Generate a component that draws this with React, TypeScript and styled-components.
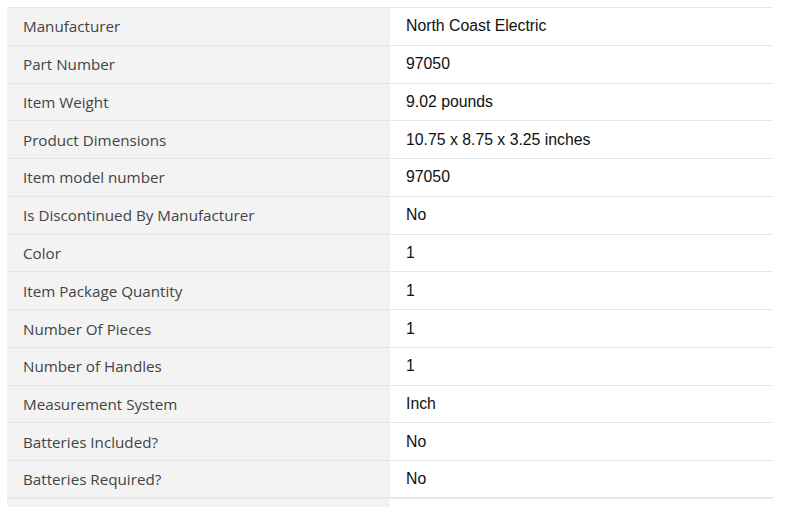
import React from "react";
import styled, { createGlobalStyle } from "styled-components";

const Global = createGlobalStyle`
  html, body { margin: 0; padding: 0; background: #ffffff; }
  body { width: 787px; height: 507px; overflow: hidden; }
`;

const Page = styled.div`
  padding: 7px 0 0 7px;
`;

const Table = styled.div`
  width: 766px;
  display: grid;
  grid-template-columns: 383px 1fr;
  border-top: 1px solid #e7e7e7;
`;

const Label = styled.div<{ $thick?: boolean }>`
  height: 37.77px;
  box-sizing: border-box;
  display: flex;
  align-items: center;
  padding-left: 16px;
  background: #f3f3f3;
  border-bottom: ${(p) => (p.$thick ? "2px" : "1px")} solid #e7e7e7;
  font-family: "Open Sans", sans-serif;
  font-size: 15.2px;
  color: #444444;
  white-space: nowrap;
`;

const Value = styled.div<{ $thick?: boolean }>`
  height: 37.77px;
  box-sizing: border-box;
  display: flex;
  align-items: center;
  padding-left: 16px;
  background: #ffffff;
  border-bottom: ${(p) => (p.$thick ? "2px" : "1px")} solid #e7e7e7;
  font-family: "Liberation Sans", Arial, sans-serif;
  font-size: 15.8px;
  color: #0f1111;
  white-space: nowrap;
`;

const Filler = styled.div`
  height: 20px;
  background: #f3f3f3;
`;

const rows: [string, string][] = [
  ["Manufacturer", "North Coast Electric"],
  ["Part Number", "97050"],
  ["Item Weight", "9.02 pounds"],
  ["Product Dimensions", "10.75 x 8.75 x 3.25 inches"],
  ["Item model number", "97050"],
  ["Is Discontinued By Manufacturer", "No"],
  ["Color", "1"],
  ["Item Package Quantity", "1"],
  ["Number Of Pieces", "1"],
  ["Number of Handles", "1"],
  ["Measurement System", "Inch"],
  ["Batteries Included?", "No"],
  ["Batteries Required?", "No"],
];

export default function App() {
  return (
    <Page>
      <Global />
      <Table>
        {rows.map(([k, v], i) => (
          <React.Fragment key={k}>
            <Label $thick={i === rows.length - 1}>{k}</Label>
            <Value $thick={i === rows.length - 1}>{v}</Value>
          </React.Fragment>
        ))}
        <Filler />
      </Table>
    </Page>
  );
}
